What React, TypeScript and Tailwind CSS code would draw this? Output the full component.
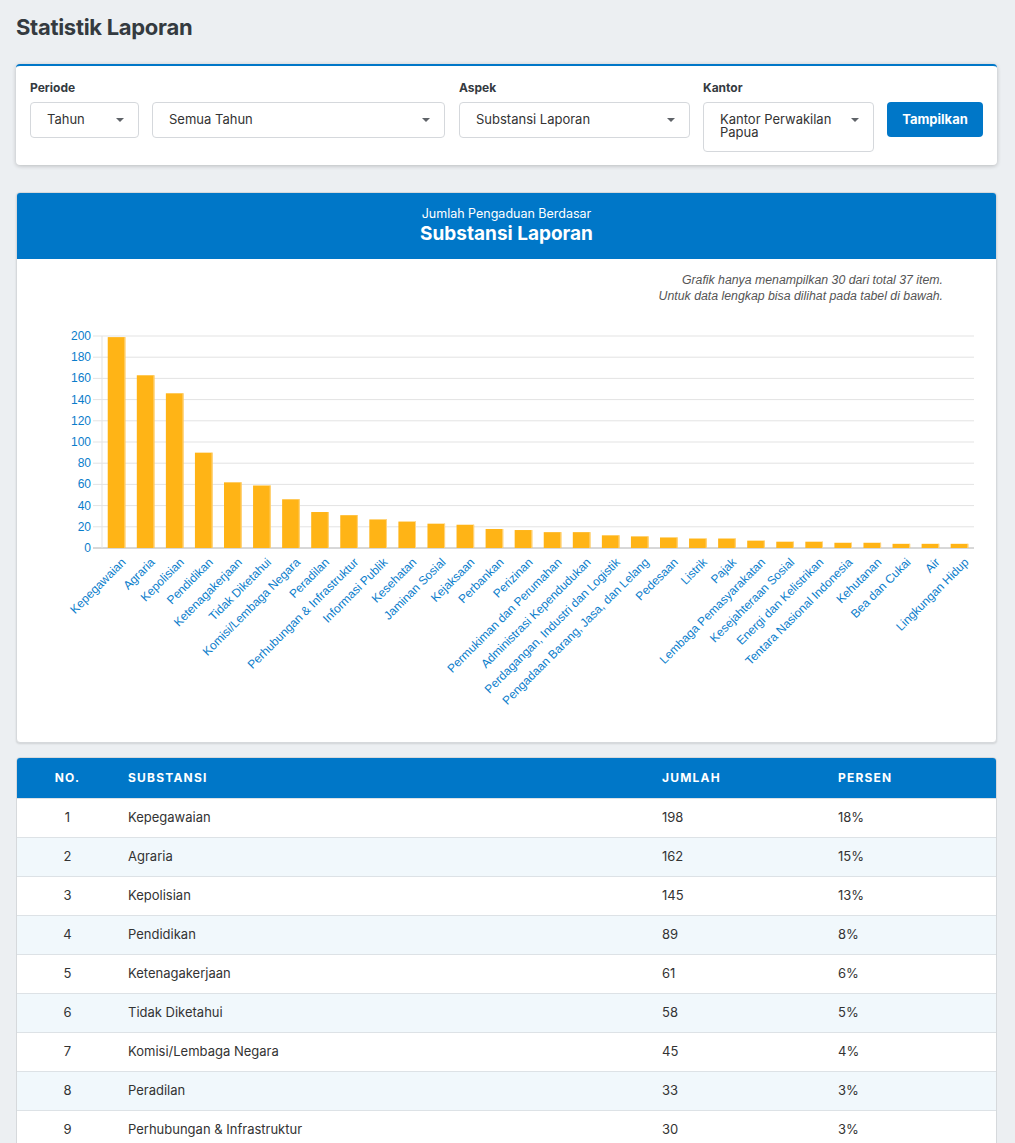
import React from 'react'

const items: [string, number][] = [
  ['Kepegawaian', 198],
  ['Agraria', 162],
  ['Kepolisian', 145],
  ['Pendidikan', 89],
  ['Ketenagakerjaan', 61],
  ['Tidak Diketahui', 58],
  ['Komisi/Lembaga Negara', 45],
  ['Peradilan', 33],
  ['Perhubungan & Infrastruktur', 30],
  ['Informasi Publik', 26],
  ['Kesehatan', 24],
  ['Jaminan Sosial', 22],
  ['Kejaksaan', 21],
  ['Perbankan', 17],
  ['Perizinan', 16],
  ['Permukiman dan Perumahan', 14],
  ['Administrasi Kependudukan', 14],
  ['Perdagangan, Industri dan Logistik', 11],
  ['Pengadaan Barang, Jasa, dan Lelang', 10],
  ['Pedesaan', 9],
  ['Listrik', 8],
  ['Pajak', 8],
  ['Lembaga Pemasyarakatan', 6],
  ['Kesejahteraan Sosial', 5],
  ['Energi dan Kelistrikan', 5],
  ['Tentara Nasional Indonesia', 4],
  ['Kehutanan', 4],
  ['Bea dan Cukai', 3],
  ['Air', 3],
  ['Lingkungan Hidup', 3],
]

const tableRows: [string, number, string][] = [
  ['Kepegawaian', 198, '18%'],
  ['Agraria', 162, '15%'],
  ['Kepolisian', 145, '13%'],
  ['Pendidikan', 89, '8%'],
  ['Ketenagakerjaan', 61, '6%'],
  ['Tidak Diketahui', 58, '5%'],
  ['Komisi/Lembaga Negara', 45, '4%'],
  ['Peradilan', 33, '3%'],
  ['Perhubungan & Infrastruktur', 30, '3%'],
]

function Caret() {
  return (
    <svg width="8" height="4" viewBox="0 0 8 4" className="shrink-0">
      <path d="M0 0 L8 0 L4 4 Z" fill="#5f6368" />
    </svg>
  )
}

function Select({ label, width }: { label: string; width: string }) {
  return (
    <div className={`flex h-[36px] items-center justify-between rounded-[4px] border border-[#d5d8dc] bg-white pl-[16px] pr-[14px] text-[13px] text-[#333] ${width}`}>
      <span>{label}</span>
      <Caret />
    </div>
  )
}

function Chart() {
  const left = 85
  const right = 957
  const y0 = 227
  const unit = 1.06
  const step = (right - left) / items.length
  const ticks = [0, 20, 40, 60, 80, 100, 120, 140, 160, 180, 200]
  return (
    <svg width="979" height="421" className="block" style={{ fontFamily: '"Liberation Sans", Arial, sans-serif' }}>
      {ticks.map((t) => {
        const y = y0 - t * unit
        return (
          <g key={t}>
            <line x1={76} x2={right} y1={y} y2={y} stroke={t === 0 ? '#b0b0b0' : '#e3e3e3'} strokeWidth="1" />
            <text x={74} y={y + 4} textAnchor="end" fontSize="12" fill="#0a7dcb">
              {t}
            </text>
          </g>
        )
      })}
      <line x1={left} x2={left} y1={15} y2={y0} stroke="#e3e3e3" />
      {items.map(([name, v], i) => {
        const cx = left + step * (i + 0.5)
        const h = v * unit + 1
        return (
          <g key={name}>
            <rect x={cx - 8.8} y={y0 - h} width={17.6} height={h} fill="#ffb416" />
            <rect x={cx + 7.8} y={y0 - h} width={1} height={h} fill="#ffd581" />
            <text
              x={cx + 10}
              y={242}
              textAnchor="end"
              fontSize="12"
              fill="#0a7dcb"
              transform={`rotate(-45 ${cx + 10} 242)`}
            >
              {name}
            </text>
          </g>
        )
      })}
    </svg>
  )
}

export default function App() {
  return (
    <div className="min-h-screen bg-[#eceff2] px-[16px] pt-[13px] pb-[20px] font-['Inter',sans-serif] text-[#333]">
      <h1 className="mb-[23px] text-[22px] font-bold leading-[28px] tracking-[-0.3px] text-[#343a40]">Statistik Laporan</h1>

      <div className="w-[981px] rounded-[4px] border-t-2 border-[#0077c8] bg-white px-[14px] pt-[14px] pb-[13px] shadow-[0_1px_4px_rgba(0,0,0,0.22)]">
        <div className="flex items-start gap-[13px]">
          <div className="flex flex-col">
            <div className="mb-[6px] text-[12px] font-bold leading-[16px] text-[#343a40]">Periode</div>
            <div className="flex gap-[13px]">
              <Select label="Tahun" width="w-[109px]" />
              <Select label="Semua Tahun" width="w-[293px]" />
            </div>
          </div>
          <div className="ml-[1px] flex flex-col">
            <div className="mb-[6px] text-[12px] font-bold leading-[16px] text-[#343a40]">Aspek</div>
            <Select label="Substansi Laporan" width="w-[231px]" />
          </div>
          <div className="flex flex-col">
            <div className="mb-[6px] text-[12px] font-bold leading-[16px] text-[#343a40]">Kantor</div>
            <div className="flex h-[50px] w-[171px] items-start justify-between rounded-[4px] border border-[#d5d8dc] bg-white pt-[10px] pl-[16px] pr-[14px] text-[13px] leading-[13px] text-[#333]">
              <span className="w-[112px]">Kantor Perwakilan Papua</span>
              <div className="pt-[5px]">
                <Caret />
              </div>
            </div>
          </div>
          <button className="mt-[22px] h-[35px] w-[97px] rounded-[4px] bg-[#0077c8] text-[13px] font-bold text-white">
            Tampilkan
          </button>
        </div>
      </div>

      <div className="mt-[27px] w-[981px] overflow-hidden rounded-[4px] border border-[#d6d9dc] bg-white shadow-[0_1px_2px_rgba(0,0,0,0.12)]">
        <div className="flex h-[66px] flex-col items-center justify-center bg-[#0077c8] pb-[2px] text-white">
          <div className="text-[12.5px] leading-[17px]">Jumlah Pengaduan Berdasar</div>
          <div className="text-[19px] font-bold leading-[24px]">Substansi Laporan</div>
        </div>
        <div className="pt-[13px] pr-[53px] text-right font-['Liberation_Sans',Arial,sans-serif] text-[12.3px] italic leading-[16px] text-[#555]">
          <div>Grafik hanya menampilkan 30 dari total 37 item.</div>
          <div>Untuk data lengkap bisa dilihat pada tabel di bawah.</div>
        </div>
        <div className="mt-[17px]">
          <Chart />
        </div>
      </div>

      <div className="mt-[14px] w-[981px] overflow-hidden rounded-[4px] border border-[#d6d9dc] bg-white">
        <div className="grid h-[40px] grid-cols-[101px_534px_176px_1fr] items-center bg-[#0077c8] text-[12px] font-bold uppercase tracking-[1.2px] text-white">
          <div className="text-center">No.</div>
          <div className="px-[10px]">Substansi</div>
          <div className="px-[10px]">Jumlah</div>
          <div className="px-[10px]">Persen</div>
        </div>
        {tableRows.map(([name, v, p], i) => (
          <div
            key={name}
            className={`grid h-[39px] grid-cols-[101px_534px_176px_1fr] items-center border-t border-[#dde2e6] text-[13px] text-[#333] first:border-t-0 ${i % 2 === 1 ? 'bg-[#f1f8fc]' : 'bg-white'}`}
          >
            <div className="text-center">{i + 1}</div>
            <div className="px-[10px]">{name}</div>
            <div className="px-[10px]">{v}</div>
            <div className="px-[10px]">{p}</div>
          </div>
        ))}
      </div>
    </div>
  )
}
